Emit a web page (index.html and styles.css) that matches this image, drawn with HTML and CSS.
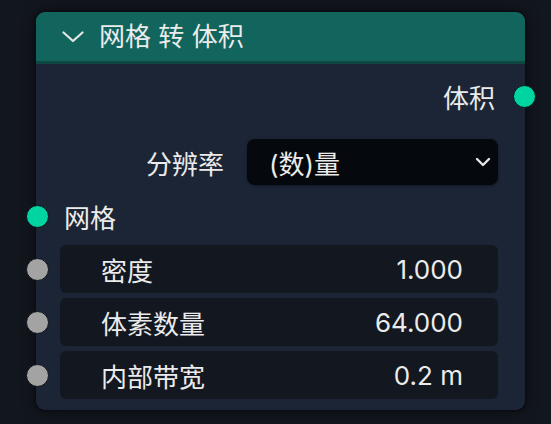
FILE: index.html
```html
<!DOCTYPE html>
<html lang="zh">
<head>
<meta charset="utf-8">
<link rel="stylesheet" href="styles.css">
</head>
<body>
<div class="node">
  <div class="header">
    <svg class="collapse" width="22" height="12" viewBox="0 0 22 12"><path d="M1.5 1.5 L11 10 L20.5 1.5" fill="none" stroke="#e6e6e6" stroke-width="2.2" stroke-linecap="round" stroke-linejoin="round"/></svg>
    <span class="title">网格 转 体积</span>
  </div>
  <div class="body">
    <div class="row output">
      <span class="label">体积</span>
      <span class="socket geo out"></span>
    </div>
    <div class="row enum">
      <span class="label">分辨率</span>
      <div class="dropdown">
        <span>(数)量</span>
        <svg width="16" height="10" viewBox="0 0 16 10"><path d="M2 2 L8 8 L14 2" fill="none" stroke="#e6e6e6" stroke-width="2.4" stroke-linecap="round" stroke-linejoin="round"/></svg>
      </div>
    </div>
    <div class="row input">
      <span class="socket geo in"></span>
      <span class="label">网格</span>
    </div>
    <div class="fields">
      <div class="field">
        <span class="socket val in"></span>
        <span class="label">密度</span><span class="value">1.000</span>
      </div>
      <div class="field">
        <span class="socket val in"></span>
        <span class="label">体素数量</span><span class="value">64.000</span>
      </div>
      <div class="field">
        <span class="socket val in"></span>
        <span class="label">内部带宽</span><span class="value">0.2 m</span>
      </div>
    </div>
  </div>
</div>
</body>
</html>
```

FILE: styles.css
```css
html, body {
  margin: 0;
  padding: 0;
  background: #12161d;
  width: 551px;
  height: 424px;
  overflow: hidden;
}
body {
  font-family: "Inter", "Noto Sans CJK SC", sans-serif;
  font-size: 26px;
  color: #ebebeb;
  padding-top: 12px;
  padding-left: 36px;
  box-sizing: border-box;
}
.node {
  width: 489px;
  height: 398px;
  border-radius: 9px;
  background: #1c2536;
  box-shadow: 0 0 0 1.5px #0a0d12, 0 0 14px rgba(0,0,0,0.55);
  display: flex;
  flex-direction: column;
  position: relative;
}
.header {
  height: 49px;
  background: #12655d;
  border-bottom: 3px solid #0f4741;
  border-radius: 9px 9px 0 0;
  display: flex;
  align-items: center;
  padding-left: 26px;
  gap: 15px;
}
.collapse { display: block; }
.title { line-height: 1; padding-top: 1px; }
.body {
  display: flex;
  flex-direction: column;
  padding-top: 12px;
}
.row {
  position: relative;
  height: 40px;
  display: flex;
  align-items: center;
}
.output {
  justify-content: flex-end;
  padding-right: 30px;
}
.enum {
  height: 46px;
  margin-top: 23px;
  justify-content: flex-end;
  padding-right: 27px;
  gap: 23px;
}
.dropdown {
  width: 251px;
  height: 46px;
  box-sizing: border-box;
  background: #05080c;
  border-radius: 8px;
  box-shadow: 0 1px 3px rgba(0,0,0,0.4);
  display: flex;
  align-items: center;
  justify-content: space-between;
  padding-left: 22px;
  padding-right: 7px;
}
.dropdown svg { display: block; }
.input {
  margin-top: 11px;
  padding-left: 28px;
}
.fields {
  margin-top: 9px;
  display: flex;
  flex-direction: column;
  gap: 5px;
}
.field {
  position: relative;
  height: 48px;
  margin-left: 24px;
  margin-right: 27px;
  background: #131720;
  border-radius: 6px;
  display: flex;
  align-items: center;
  justify-content: space-between;
  padding-left: 41px;
  padding-right: 35px;
}
.socket {
  position: absolute;
  width: 23px;
  height: 23px;
  box-sizing: border-box;
  border-radius: 50%;
  border: 1.5px solid #0c1017;
  top: 50%;
  margin-top: -11.5px;
}
.geo { background: #00d5a2; }
.val { background: #a3a3a3; }
.row .socket.in { left: -10.5px; }
.row .socket.out { right: -10.5px; }
.field .socket.in { left: -34.5px; }
```
